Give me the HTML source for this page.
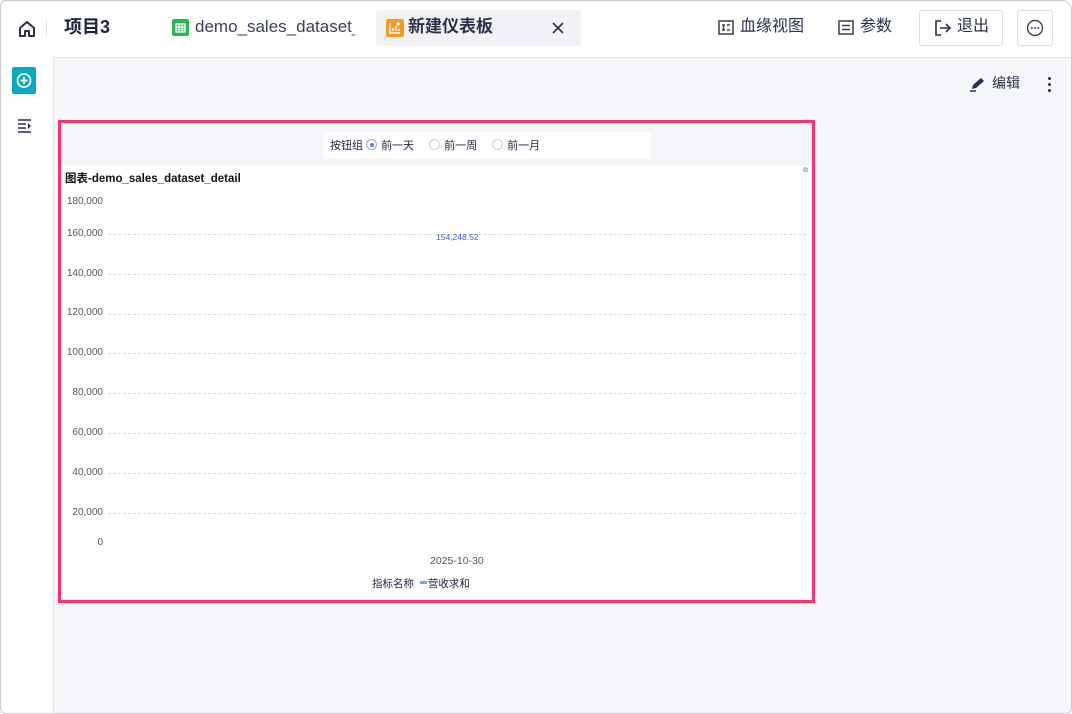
<!DOCTYPE html>
<html><head><meta charset="utf-8"><style>
*{box-sizing:border-box;margin:0;padding:0}
body{width:1072px;height:714px;overflow:hidden;background:#fff;font-family:"Liberation Sans","Noto Sans CJK SC",sans-serif;color:#1f2340}
.win{position:absolute;left:0;top:0;width:1072px;height:714px;overflow:hidden;background:#f5f6fa}
.frame{position:absolute;left:0;top:0;width:1072px;height:714px;border:1px solid #c9cbd0;border-radius:6px 10px 6px 6px;pointer-events:none}
.hdr{position:absolute;left:0;top:0;right:0;height:58px;background:#fff;border-bottom:1px solid #e3e4e8}
.side{position:absolute;left:0;top:57px;width:54px;bottom:0;background:#fff;border-right:1px solid #e3e4e8}
.t{position:absolute;white-space:nowrap}
.btn{position:absolute;border:1px solid #dcdee3;border-radius:3px;background:#fff}
.gl{position:absolute;left:108px;width:699px;border-top:1px dashed #dcdde2}
.yl{position:absolute;left:58px;width:45px;text-align:right;font-size:10px;color:#555;line-height:12px}
.rad{display:inline-block;width:11px;height:11px;border:1px solid #ccd;border-radius:50%;vertical-align:-1px;margin-right:4px;position:relative}
</style></head><body><div class="win">
<div class="hdr">
<svg class="t" style="left:17px;top:19px" width="20" height="20" viewBox="0 0 20 20"><path d="M3 9 L10 3 L17 9 V17 H12 V12 H8 V17 H3 Z" fill="none" stroke="#2a2f4a" stroke-width="2" stroke-linejoin="round"/></svg>
<div class="t" style="left:46px;top:20px;width:1px;height:16px;background:#e0e0e0"></div>
<div class="t" style="left:64px;top:15px;font-size:18px;font-weight:bold;line-height:24px">项目3</div>
<div class="t" style="left:172px;top:19px;width:17px;height:17px;background:#2fb454;border-radius:2px"><svg width="17" height="17"><path d="M4 5h9v8H4z M4 8h9 M4 10.5h9 M7 5v8 M10 5v8" stroke="#fff" stroke-width="1.2" fill="none"/></svg></div>
<div class="t" style="left:195px;top:15px;font-size:17px;color:#3a3f5a;width:160px;overflow:hidden;line-height:24px">demo_sales_dataset_detail</div>
<div class="t" style="left:376px;top:10px;width:205px;height:36px;background:#f1f2f6;border-radius:3px"></div>
<div class="t" style="left:386px;top:19px;width:18px;height:18px;background:#f59a23;border-radius:2px"><svg width="18" height="18"><path d="M4 4v10h10 M7 12V9 M10 12V7 M13 12V10 M12 3v4 M10 5h4" stroke="#fff" stroke-width="1.4" fill="none"/></svg></div>
<div class="t" style="left:408px;top:15px;font-size:17px;font-weight:bold;color:#2a2f4a;line-height:24px">新建仪表板</div>
<svg class="t" style="left:552px;top:22px" width="12" height="12"><path d="M1 1l10 10M11 1L1 11" stroke="#333" stroke-width="1.6"/></svg>
<svg class="t" style="left:718px;top:20px" width="16" height="16"><rect x="1" y="1" width="14" height="13" fill="none" stroke="#3a3f5a" stroke-width="1.5"/><path d="M4 5h3 M4 10h3 M9 5h3 M9 10h3 M5.5 5v5" stroke="#3a3f5a" stroke-width="1.5"/></svg>
<div class="t" style="left:740px;top:16px;font-size:16px;line-height:22px;color:#2a2f4a">血缘视图</div>
<svg class="t" style="left:838px;top:20px" width="16" height="16"><rect x="1" y="1" width="14" height="13" fill="none" stroke="#3a3f5a" stroke-width="1.5"/><path d="M4 5.5h8 M4 9.5h8" stroke="#3a3f5a" stroke-width="1.5"/></svg>
<div class="t" style="left:860px;top:16px;font-size:16px;line-height:22px;color:#2a2f4a">参数</div>
<div class="btn" style="left:919px;top:10px;width:84px;height:36px"></div>
<svg class="t" style="left:934px;top:19px" width="18" height="18"><path d="M7 2H2v14h5 M6 9h10 M12 5l4 4-4 4" fill="none" stroke="#2a2f4a" stroke-width="1.6"/></svg>
<div class="t" style="left:957px;top:16px;font-size:16px;line-height:22px;color:#2a2f4a">退出</div>
<div class="btn" style="left:1017px;top:10px;width:36px;height:36px"></div>
<svg class="t" style="left:1026px;top:19px" width="18" height="18"><circle cx="9" cy="9" r="7.5" fill="none" stroke="#3a3f5a" stroke-width="1.4"/><circle cx="5.8" cy="9" r="1" fill="#3a3f5a"/><circle cx="9" cy="9" r="1" fill="#3a3f5a"/><circle cx="12.2" cy="9" r="1" fill="#3a3f5a"/></svg>
</div>
<div class="side">
<div class="t" style="left:12px;top:10px;width:24px;height:27px;background:#0aa9c0;border-radius:2px"><svg width="24" height="27"><circle cx="12" cy="13.5" r="6.5" fill="none" stroke="#fff" stroke-width="1.8"/><path d="M12 10v7 M8.5 13.5h7" stroke="#fff" stroke-width="1.8"/></svg></div>
<svg class="t" style="left:17px;top:60px" width="16" height="16"><path d="M1 3h13 M1 7h8 M1 11h8 M1 15h13" stroke="#2a2f4a" stroke-width="1.6"/><path d="M11 6l3 3-3 3z" fill="#2a2f4a"/></svg>
</div>
<svg class="t" style="left:969px;top:76px" width="18" height="16"><path d="M3 13l1-4 8-7 3 3-8 7z" fill="#2a2f4a"/><path d="M1 15h6" stroke="#2a2f4a" stroke-width="1.5"/></svg>
<div class="t" style="left:992px;top:74px;font-size:14px;line-height:18px;color:#2a2f4a">编辑</div>
<div class="t" style="left:1048px;top:77px;width:3px;height:3px;background:#2a2f4a;border-radius:50%;box-shadow:0 6px 0 #2a2f4a,0 12px 0 #2a2f4a"></div>

<div class="t" style="left:58px;top:120px;width:757px;height:483px;border:3px solid #f5336f;background:#f5f6fa"></div>
<div class="t" style="left:323px;top:132px;width:327px;height:27px;background:#fff"></div>
<div class="t" style="left:330px;top:139px;font-size:11px;line-height:14px;color:#1f2340">按钮组 <span class="rad" style="border-color:#8aa6f5"><span style="position:absolute;left:2.5px;top:2.5px;width:4px;height:4px;border-radius:50%;background:#5b7ff0"></span></span>前一天 <span style="display:inline-block;width:12px"></span><span class="rad"></span>前一周 <span style="display:inline-block;width:12px"></span><span class="rad"></span>前一月</div>
<div class="t" style="left:61px;top:165px;width:751px;height:434px;background:#fff"></div>
<div class="t" style="left:65px;top:172px;font-size:11.5px;font-weight:bold;line-height:14px;color:#111">图表-demo_sales_dataset_detail</div>
<div class="t" style="left:803px;top:167px;font-size:7px;color:#888">⧉</div>
<div class="yl" style="top:196px">180,000</div>
<div class="yl" style="top:228px">160,000</div><div class="gl" style="top:234px"></div>
<div class="yl" style="top:268px">140,000</div><div class="gl" style="top:274px"></div>
<div class="yl" style="top:307px">120,000</div><div class="gl" style="top:314px"></div>
<div class="yl" style="top:347px">100,000</div><div class="gl" style="top:353px"></div>
<div class="yl" style="top:387px">80,000</div><div class="gl" style="top:393px"></div>
<div class="yl" style="top:427px">60,000</div><div class="gl" style="top:433px"></div>
<div class="yl" style="top:467px">40,000</div><div class="gl" style="top:473px"></div>
<div class="yl" style="top:507px">20,000</div><div class="gl" style="top:513px"></div>
<div class="yl" style="top:537px">0</div>
<div class="t" style="left:436px;top:232px;font-size:8.5px;color:#3a5fd0">154,248.52</div>
<div class="t" style="left:430px;top:555px;font-size:10.5px;color:#555">2025-10-30</div>
<div class="t" style="left:372px;top:576px;font-size:10.5px;color:#1f2340">指标名称 <span style="display:inline-block;width:7px;height:3px;background:#7fa0f5;vertical-align:3px;margin:0 1px 0 3px"></span>营收求和</div>
</div><div class="frame"></div></body></html>
